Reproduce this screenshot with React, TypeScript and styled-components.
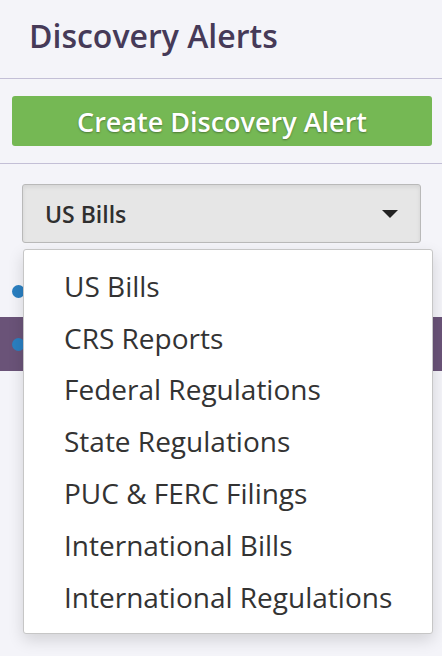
import React from "react";
import styled, { createGlobalStyle } from "styled-components";

const Global = createGlobalStyle`
  html, body { margin: 0; padding: 0; background: #f4f4f9; }
  body { font-family: "Open Sans", "Noto Sans", sans-serif; }
  * { box-sizing: border-box; }
`;

const Sidebar = styled.div`
  width: 442px;
  height: 656px;
  background: #f4f4f9;
  position: relative;
  overflow: hidden;
`;

const Header = styled.div`
  height: 79px;
  padding: 14px 0 0 29px;
  border-bottom: 1.5px solid #c3bfd6;
`;

const Title = styled.h1`
  margin: 0;
  font-size: 32px;
  font-weight: 600;
  color: #463a58;
  line-height: 44px;
`;

const ActionBar = styled.div`
  padding: 17px 10px 17px 12px;
  border-bottom: 1.5px solid #c3bfd6;
`;

const CreateButton = styled.button`
  display: block;
  width: 100%;
  height: 50px;
  padding: 0;
  border: none;
  border-radius: 3px;
  background: #75b854;
  color: #ffffff;
  font-family: "Open Sans", "Noto Sans", sans-serif;
  font-size: 27px;
  font-weight: 600;
  text-shadow: 0 1px 2px rgba(0, 0, 0, 0.35);
  cursor: pointer;
`;

const SelectWrap = styled.div`
  position: relative;
  padding: 20px 21px 0 22px;
`;

const SelectBox = styled.div`
  height: 59px;
  display: flex;
  align-items: center;
  justify-content: space-between;
  padding: 0 22px 0 22px;
  background: #e6e6e6;
  border: 1px solid #b9b9b9;
  border-radius: 3px;
  box-shadow: inset 0 2px 4px rgba(0, 0, 0, 0.08);
  font-size: 23px;
  font-weight: 600;
  color: #2f2f2f;
`;

const Caret = styled.span`
  width: 0;
  height: 0;
  border-left: 8px solid transparent;
  border-right: 8px solid transparent;
  border-top: 8px solid #222;
  margin-top: 1px;
`;

const AlertList = styled.div`
  margin-top: 22px;
  display: flex;
  flex-direction: column;
`;

const AlertRow = styled.div<{ $active?: boolean }>`
  height: ${(p) => (p.$active ? "54px" : "52px")};
  display: flex;
  align-items: center;
  padding-left: 12px;
  background: ${(p) => (p.$active ? "#6a5378" : "transparent")};
`;

const Dot = styled.span`
  width: 13px;
  height: 13px;
  border-radius: 50%;
  background: #2a7fc1;
`;

const Menu = styled.ul`
  position: absolute;
  top: 249px;
  left: 23px;
  width: 410px;
  height: 385px;
  margin: 0;
  padding: 10px 0 0 0;
  list-style: none;
  background: #ffffff;
  border: 1px solid #c6c6c6;
  border-radius: 3px;
  box-shadow: 0 6px 16px rgba(0, 0, 0, 0.14);
`;

const MenuItem = styled.li`
  height: 51.8px;
  display: flex;
  align-items: center;
  padding-left: 40px;
  font-size: 28px;
  color: #333333;
`;

const options = [
  "US Bills",
  "CRS Reports",
  "Federal Regulations",
  "State Regulations",
  "PUC & FERC Filings",
  "International Bills",
  "International Regulations",
];

export default function App() {
  return (
    <Sidebar>
      <Global />
      <Header>
        <Title>Discovery Alerts</Title>
      </Header>
      <ActionBar>
        <CreateButton>Create Discovery Alert</CreateButton>
      </ActionBar>
      <SelectWrap>
        <SelectBox>
          <span>US Bills</span>
          <Caret />
        </SelectBox>
      </SelectWrap>
      <AlertList>
        <AlertRow>
          <Dot />
        </AlertRow>
        <AlertRow $active>
          <Dot />
        </AlertRow>
      </AlertList>
      <Menu>
        {options.map((o) => (
          <MenuItem key={o}>{o}</MenuItem>
        ))}
      </Menu>
    </Sidebar>
  );
}
